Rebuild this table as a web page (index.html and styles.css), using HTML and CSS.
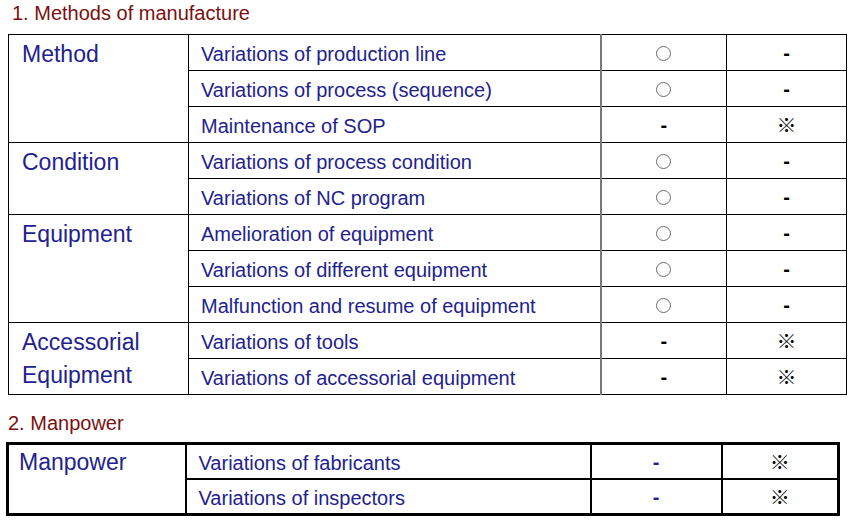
FILE: index.html
```html
<!DOCTYPE html>
<html>
<head>
<meta charset="utf-8">
<link rel="stylesheet" href="styles.css">
</head>
<body>
<h2 class="title t1">1. Methods of manufacture</h2>
<table class="grid g1">
  <colgroup><col class="c1"><col class="c2"><col class="c3"><col class="c4"></colgroup>
  <tr><td class="cat" rowspan="3">Method</td><td class="item">Variations of production line</td><td class="sym gl"><span class="circ"></span></td><td class="sym"><span class="dash">-</span></td></tr>
  <tr><td class="item">Variations of process (sequence)</td><td class="sym gl"><span class="circ"></span></td><td class="sym"><span class="dash">-</span></td></tr>
  <tr><td class="item">Maintenance of SOP</td><td class="sym gl"><span class="dash">-</span></td><td class="sym"><span class="kome">※</span></td></tr>
  <tr><td class="cat" rowspan="2">Condition</td><td class="item">Variations of process condition</td><td class="sym gl"><span class="circ"></span></td><td class="sym"><span class="dash">-</span></td></tr>
  <tr><td class="item">Variations of NC program</td><td class="sym gl"><span class="circ"></span></td><td class="sym"><span class="dash">-</span></td></tr>
  <tr><td class="cat" rowspan="3">Equipment</td><td class="item">Amelioration of equipment</td><td class="sym gl"><span class="circ"></span></td><td class="sym"><span class="dash">-</span></td></tr>
  <tr><td class="item">Variations of different equipment</td><td class="sym gl"><span class="circ"></span></td><td class="sym"><span class="dash">-</span></td></tr>
  <tr><td class="item">Malfunction and resume of equipment</td><td class="sym gl"><span class="circ"></span></td><td class="sym"><span class="dash">-</span></td></tr>
  <tr><td class="cat" rowspan="2">Accessorial<br>Equipment</td><td class="item">Variations of tools</td><td class="sym gl"><span class="dash">-</span></td><td class="sym"><span class="kome">※</span></td></tr>
  <tr><td class="item">Variations of accessorial equipment</td><td class="sym gl"><span class="dash">-</span></td><td class="sym"><span class="kome">※</span></td></tr>
</table>
<h2 class="title t2">2. Manpower</h2>
<table class="grid g2">
  <colgroup><col class="d1"><col class="d2"><col class="d3"><col class="d4"></colgroup>
  <tr><td class="cat" rowspan="2">Manpower</td><td class="item">Variations of fabricants</td><td class="sym gl"><span class="dash blue">-</span></td><td class="sym"><span class="kome">※</span></td></tr>
  <tr><td class="item">Variations of inspectors</td><td class="sym gl"><span class="dash blue">-</span></td><td class="sym"><span class="kome">※</span></td></tr>
</table>
</body>
</html>
```
FILE: styles.css
```css
html, body { margin: 0; padding: 0; background: #fff; }
body { font-family: "Liberation Sans", Arial, sans-serif; }

.title {
  font-weight: normal;
  font-size: 20px;
  line-height: 24px;
  color: #7c0f0f;
  margin: 0;
}
.t1 { padding: 1px 0 0 12px; margin-bottom: 9px; }
.t2 { padding: 0 0 0 8px; margin-top: 16px; margin-bottom: 7px; }

.grid {
  border-collapse: collapse;
  table-layout: fixed;
  color: #22228f;
}
.grid td { padding: 0; border: 1px solid #000; }
.g1 { margin-left: 8px; width: 839px; }
.g1 .c1 { width: 180px; }
.g1 .c2 { width: 412px; }
.g1 .c3 { width: 126px; }
.g1 .c4 { width: 120px; }
.g1 td { height: 35px; }
.g1 td.item { height: 33px; }
.g1 td.gl { border-left: 2px solid #777; }

.g2 { margin-left: 6px; width: 831px; border: 3px solid #000; }
.g2 .d1 { width: 178px; }
.g2 .d2 { width: 405px; }
.g2 .d3 { width: 131px; }
.g2 .d4 { width: 117px; }
.g2 td { height: 33px; border-width: 2px; border-color: #000; }
.g2 td.item { height: 31px; }
.g2 td.gl { border-left: 2px solid #444; }

.grid td.cat {
  vertical-align: top;
  font-size: 23px;
  line-height: 33px;
  padding: 3px 0 0 13px;
}
.g2 td.cat { padding: 1px 0 0 10px; }
.grid td.item {
  font-size: 20px;
  line-height: 24px;
  padding: 2px 0 0 12px;
  white-space: nowrap;
}
.sym { text-align: center; vertical-align: middle; }
.circ {
  display: inline-block;
  box-sizing: border-box;
  width: 15px;
  height: 15px;
  border: 1px solid #6a6a6a;
  border-radius: 50%;
  vertical-align: middle;
  margin-top: 1px;
}
.dash {
  font-size: 20px;
  font-weight: bold;
  color: #000;
  line-height: 24px;
}
.dash.blue { color: #24249a; }
.kome {
  font-family: "Noto Sans CJK JP", sans-serif;
  font-size: 20px;
  color: #000;
  line-height: 24px;
}
```
